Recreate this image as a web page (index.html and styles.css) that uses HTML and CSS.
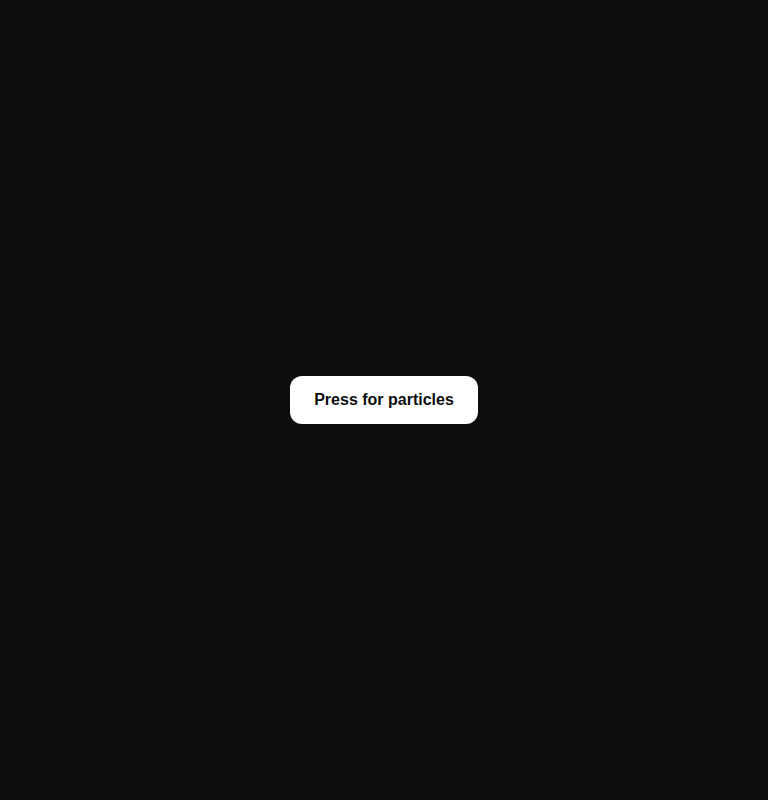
FILE: index.html
```html
<!DOCTYPE html>
<html>
<head>
<meta charset="utf-8">
<link rel="stylesheet" href="styles.css">
</head>
<body>
<main class="stage">
  <button class="particle-btn">Press for particles</button>
</main>
</body>
</html>
```
FILE: styles.css
```css
html, body {
  margin: 0;
  padding: 0;
  height: 100%;
  background: #0c0d0f;
}
.stage {
  height: 800px;
  display: flex;
  align-items: center;
  justify-content: center;
}
.particle-btn {
  height: 48px;
  padding: 0 24px;
  border: none;
  border-radius: 12px;
  background: #ffffff;
  color: #0c0d0f;
  font-family: "Liberation Sans", Arial, sans-serif;
  font-weight: 700;
  font-size: 16px;
  cursor: pointer;
}
```
